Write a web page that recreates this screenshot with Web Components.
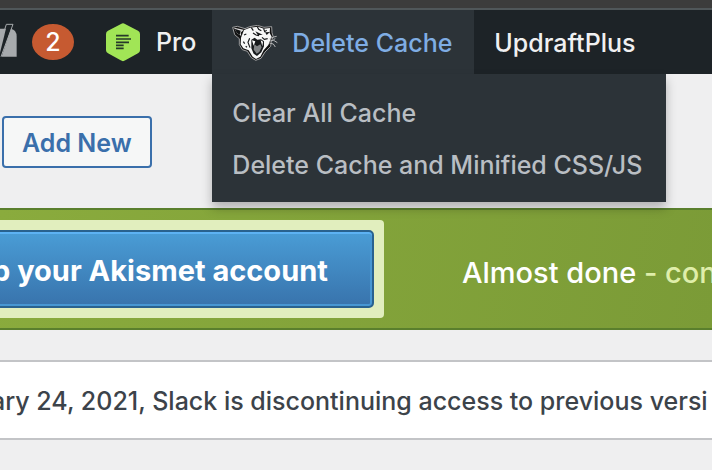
<!DOCTYPE html>
<html lang="en">
<head>
<meta charset="utf-8">
<title>Plugins</title>
<style>
body{margin:0;background:#efeff0;font-family:Inter,"Liberation Sans",sans-serif;font-size:25px;font-weight:500;line-height:32px;color:#3c434a;overflow:hidden}
</style>
</head>
<body>
<admin-bar>
  <bar-item><yoast-icon slot="icon"></yoast-icon><count-badge>2</count-badge></bar-item>
  <bar-item class="pro"><hex-icon slot="icon"></hex-icon>Pro</bar-item>
  <bar-item open><cougar-icon slot="icon"></cougar-icon>Delete Cache
    <drop-menu slot="menu">
      <menu-link>Clear All Cache</menu-link>
      <menu-link>Delete Cache and Minified CSS/JS</menu-link>
    </drop-menu>
  </bar-item>
  <bar-item>UpdraftPlus</bar-item>
</admin-bar>
<page-heading>Add New</page-heading>
<akismet-banner><span slot="action">p your Akismet account</span><span>Almost done</span><span slot="more"> - con</span></akismet-banner>
<admin-notice>ary 24, 2021, Slack is discontinuing access to previous versi</admin-notice>
<script>
const define=(name,html)=>customElements.define(name,class extends HTMLElement{
  constructor(){super();this.attachShadow({mode:"open"}).innerHTML=html}
});
define("admin-bar",`<style>
:host{display:block;position:relative;z-index:2;background:#1d2327;border-top:8px solid #3c3c3c}
nav{display:flex;height:64px;border-top:2px solid #50575a}
</style><nav><slot></slot></nav>`);
define("bar-item",`<style>
:host{display:block;position:relative;color:#f0f0f1;white-space:nowrap}
:host(:first-child) a{padding:0 20px 0 0}
:host(.pro) a{gap:16px;padding:0 16px 0 12px}
:host([open]){background:#2c3338;color:#7fade4}
a{display:flex;align-items:center;gap:14px;height:64px;padding:2px 22px 0 20px;box-sizing:border-box;color:inherit;text-decoration:none}
</style><a href="#"><slot name="icon"></slot><slot></slot></a><slot name="menu"></slot>`);
define("count-badge",`<style>
:host{display:flex;align-items:center;justify-content:center;width:42px;height:36px;border-radius:21px/18px;background:#c65a31;color:#fff}
</style><slot></slot>`);
define("drop-menu",`<style>
:host{display:block;position:absolute;top:100%;left:0;padding:12px 0;background:#2c3338;color:#b9bec3;box-shadow:0 6px 10px rgba(0,0,0,.26)}
</style><slot></slot>`);
define("menu-link",`<style>
:host{display:block}
a{display:block;padding:11px 24px 9px 20px;color:inherit;text-decoration:none}
</style><a href="#"><slot></slot></a>`);
define("yoast-icon",`<style>:host{display:block}svg{display:block}</style>
<svg width="18" height="40" viewBox="0 0 54 120"><path d="M0 20H30Q50 22 50 44V104H0Z" fill="#a7aaad"/><path d="M-3 104L22 4H39L4 106Z" fill="#1d2327"/><path d="M0 66L19 7H39L3 104" fill="none" stroke="#a7aaad" stroke-width="3"/></svg>`);
define("hex-icon",`<style>:host{display:block}svg{display:block}</style>
<svg width="34" height="40" viewBox="0 0 102 120"><path d="M45 6Q51 1 57 6L96 26Q102 29 102 36V85Q102 91 96 94L58 115Q51 120 44 115L6 94Q0 91 0 85V36Q0 29 6 26Z" fill="#a1e556"/><path d="M30 41H68M30 51H75M30 61H69M30 70H53M30 79H53" stroke="#26392a" stroke-width="5"/></svg>`);
define("cougar-icon",`<style>:host{display:block}svg{display:block}</style>
<svg width="46" height="36" viewBox="12 20 138 108">
<path d="M14 27L28 24L51 31L65 25L88 21L108 27L131 25L132 43L136 56L130 68L128 84L111 101L99 120L83 126L70 118L58 99L43 94L34 79L34 61L20 49Z" fill="#111" stroke="#b4b5b6" stroke-width="2.5"/>
<path d="M48 35L66 28L90 25L107 31L126 29L125 44L131 55L126 67L121 80L107 96L97 115L84 122L74 115L62 96L46 90L38 78L39 58Z" fill="#f6f7f7"/>
<path d="M18 28L47 34L38 43L40 53L27 45Z" fill="#ddd"/><path d="M20 31L38 37L35 50L26 43Z" fill="#101213"/>
<path d="M70 28L76 37M88 25L92 33L100 37M107 31L110 40L116 36M75 44L84 50L93 52M102 57L109 63L119 61M46 70L50 76M53 84L57 87M48 50L55 47M65 60L60 72L66 88" stroke="#151719" stroke-width="3.5" fill="none"/>
<path d="M82 39L104 49L90 51ZM111 42L126 41L116 50Z" fill="#151719"/>
<path d="M70 64L80 58L88 64L99 63L108 69L108 84L100 102L87 113L77 106L70 90Z" fill="#16191b"/>
<path d="M79 78L87 84L97 78L101 87L94 101L86 106L77 94Z" fill="#808385"/>
<path d="M72 66L77 82L82 69ZM98 66L105 70L103 84Z" fill="#fff"/>
<path d="M125 61L137 56L146 54M126 68L137 66L148 73M124 74L136 77L142 86M136 66L141 60" stroke="#b5b6b7" stroke-width="3" fill="none"/>
</svg>`);
define("page-heading",`<style>
:host{display:flex;padding:42px 2px 40px}
a{padding:9px 18px 7px;border:2px solid #3a6fab;border-radius:4px;background:#f6f7f7;color:#3a6fab;font-weight:600;text-decoration:none}
</style><a href="#"><slot></slot></a>`);
define("akismet-banner",`<style>
:host{display:flex;align-items:center;gap:78px;height:118px;border:solid #5a7f2d;border-width:2px 0;background:linear-gradient(100deg,#8aab3d,#7b9b37);white-space:nowrap;overflow:hidden}
div{margin-left:-20px;padding:10px;border-radius:4px;background:#e1eebe}
button{display:block;height:78px;padding:4px 44px 0 0;border:2px solid #29628f;border-radius:5px;background:linear-gradient(#4a9dd6,#3873ac);box-shadow:inset 0 2px #5db2f3,inset 0 0 0 2px #4797d3;color:#fff;font:700 29px/32px Inter,"Liberation Sans",sans-serif}
p{margin:0;padding-top:8px;font-size:29px;color:#fff;white-space:pre}
.more{color:#dfeeaa}
</style><div><button type="button"><slot name="action"></slot></button></div><p><slot></slot><span class="more"><slot name="more"></slot></span></p>`);
define("admin-notice",`<style>
:host{display:block;margin-top:30px;padding:23px 0 21px;border:solid #c3c4c7;border-width:2px 0;background:#fff;box-shadow:0 2px 2px rgba(0,0,0,.04);white-space:nowrap;overflow:hidden}
p{margin:0 0 0 -9px}
</style><p><slot></slot></p>`);
</script>
</body>
</html>
